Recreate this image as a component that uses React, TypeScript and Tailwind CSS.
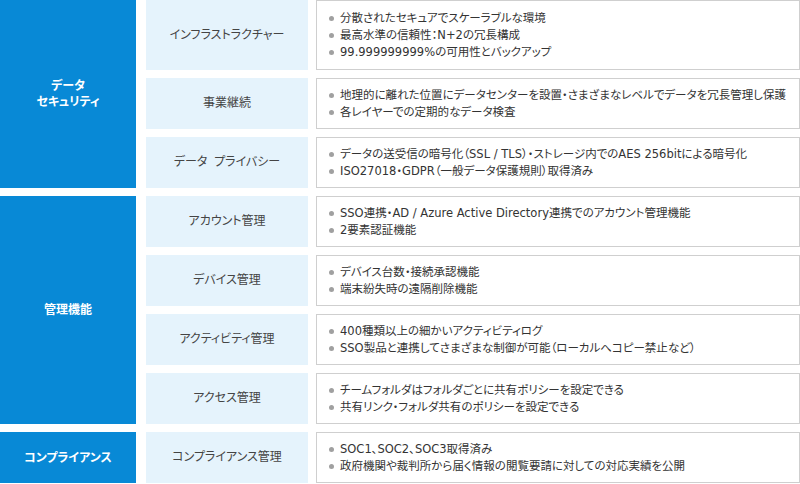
import React from "react";

type Row = { label: string; items: string[]; tall?: boolean };
type Group = { title: string[]; rows: Row[] };

const groups: Group[] = [
  {
    title: ["データ", "セキュリティ"],
    rows: [
      {
        label: "インフラストラクチャー",
        tall: true,
        items: [
          "分散されたセキュアでスケーラブルな環境",
          "最高水準の信頼性：N+2の冗長構成",
          "99.999999999%の可用性とバックアップ",
        ],
      },
      {
        label: "事業継続",
        items: [
          "地理的に離れた位置にデータセンターを設置・さまざまなレベルでデータを冗長管理し保護",
          "各レイヤーでの定期的なデータ検査",
        ],
      },
      {
        label: "データ プライバシー",
        items: [
          "データの送受信の暗号化（SSL / TLS）・ストレージ内でのAES 256bitによる暗号化",
          "ISO27018・GDPR（一般データ保護規則）取得済み",
        ],
      },
    ],
  },
  {
    title: ["管理機能"],
    rows: [
      {
        label: "アカウント管理",
        items: [
          "SSO連携・AD / Azure Active Directory連携でのアカウント管理機能",
          "2要素認証機能",
        ],
      },
      {
        label: "デバイス管理",
        items: ["デバイス台数・接続承認機能", "端末紛失時の遠隔削除機能"],
      },
      {
        label: "アクティビティ管理",
        items: [
          "400種類以上の細かいアクティビティログ",
          "SSO製品と連携してさまざまな制御が可能（ローカルへコピー禁止など）",
        ],
      },
      {
        label: "アクセス管理",
        items: [
          "チームフォルダはフォルダごとに共有ポリシーを設定できる",
          "共有リンク・フォルダ共有のポリシーを設定できる",
        ],
      },
    ],
  },
  {
    title: ["コンプライアンス"],
    rows: [
      {
        label: "コンプライアンス管理",
        items: [
          "SOC1、SOC2、SOC3取得済み",
          "政府機関や裁判所から届く情報の閲覧要請に対しての対応実績を公開",
        ],
      },
    ],
  },
];

export default function App() {
  return (
    <div
      className="w-[800px] h-[484px] bg-white flex flex-col gap-2 overflow-hidden text-[12px] leading-[17px] [font-feature-settings:'palt']"
      style={{ fontFamily: '"DejaVu Sans", "Noto Sans CJK JP", sans-serif' }}
    >
      {groups.map((g) => (
        <div key={g.title.join("")} className="flex gap-[10px]">
          <div className="w-[136px] shrink-0 bg-[#0889d6] flex flex-col items-center justify-center text-white font-bold leading-[16px]">
            {g.title.map((t) => (
              <span key={t}>{t}</span>
            ))}
          </div>
          <div className="flex-1 flex flex-col gap-2">
            {g.rows.map((r) => (
              <div
                key={r.label}
                className={`flex gap-2 ${r.tall ? "h-[70px]" : "h-[51px]"}`}
              >
                <div className="w-[162px] shrink-0 bg-[#e5f3fc] flex items-center justify-center text-[#444] [word-spacing:3px]">
                  {r.label}
                </div>
                <div className="flex-1 border border-[#cfcfcf] flex flex-col justify-center pl-3 text-[#333] text-[11.5px]">
                  {r.items.map((it) => (
                    <div key={it} className="flex items-center gap-[6px] whitespace-nowrap">
                      <span className="w-[5px] h-[5px] rounded-full bg-[#a0a0a0] shrink-0" />
                      <span>{it}</span>
                    </div>
                  ))}
                </div>
              </div>
            ))}
          </div>
        </div>
      ))}
    </div>
  );
}
